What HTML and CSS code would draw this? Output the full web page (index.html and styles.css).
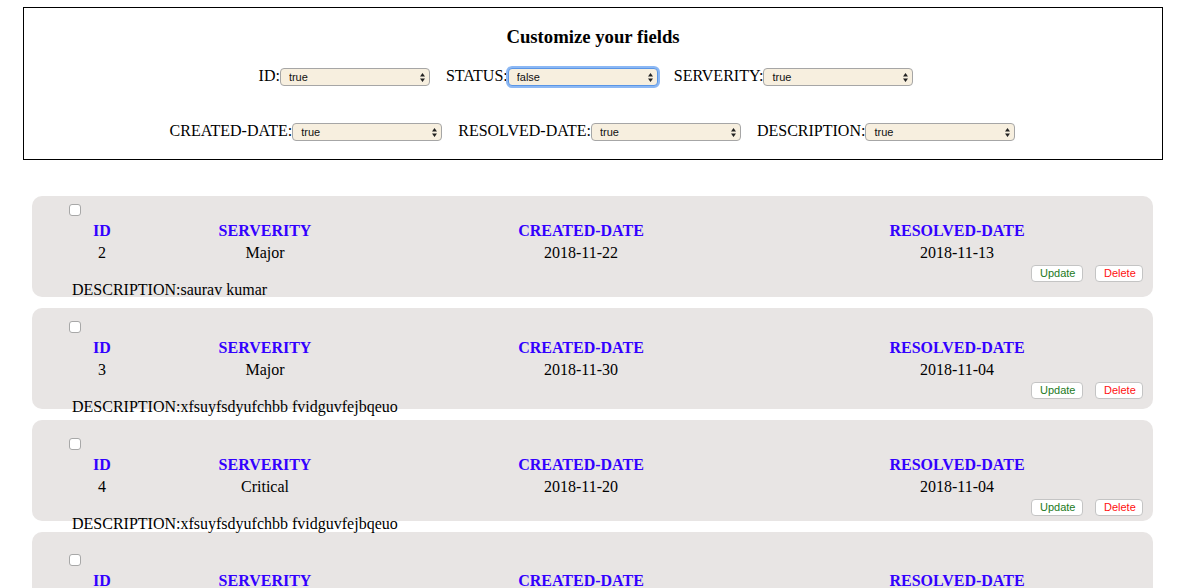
FILE: index.html
```html
<!DOCTYPE html>
<html>
<head>
<meta charset="utf-8">
<link rel="stylesheet" href="styles.css">
</head>
<body>
<div class="custom">
  <h3 class="custom-title">Customize your fields</h3>
  <div class="field-row">
    <label class="field"><span class="lbl">ID:</span><span class="sel"><select><option>true</option><option>false</option></select><svg class="arr" width="5" height="9" viewBox="0 0 5 9"><path d="M2.5 0L5 3.5H0z M2.5 9L5 5.5H0z" fill="#222"/></svg></span></label>
    <label class="field"><span class="lbl">STATUS:</span><span class="sel focus"><select><option>false</option><option>true</option></select><svg class="arr" width="5" height="9" viewBox="0 0 5 9"><path d="M2.5 0L5 3.5H0z M2.5 9L5 5.5H0z" fill="#222"/></svg></span></label>
    <label class="field"><span class="lbl">SERVERITY:</span><span class="sel"><select><option>true</option><option>false</option></select><svg class="arr" width="5" height="9" viewBox="0 0 5 9"><path d="M2.5 0L5 3.5H0z M2.5 9L5 5.5H0z" fill="#222"/></svg></span></label>
  </div>
  <div class="field-row row2">
    <label class="field"><span class="lbl">CREATED-DATE:</span><span class="sel"><select><option>true</option><option>false</option></select><svg class="arr" width="5" height="9" viewBox="0 0 5 9"><path d="M2.5 0L5 3.5H0z M2.5 9L5 5.5H0z" fill="#222"/></svg></span></label>
    <label class="field"><span class="lbl">RESOLVED-DATE:</span><span class="sel"><select><option>true</option><option>false</option></select><svg class="arr" width="5" height="9" viewBox="0 0 5 9"><path d="M2.5 0L5 3.5H0z M2.5 9L5 5.5H0z" fill="#222"/></svg></span></label>
    <label class="field"><span class="lbl">DESCRIPTION:</span><span class="sel"><select><option>true</option><option>false</option></select><svg class="arr" width="5" height="9" viewBox="0 0 5 9"><path d="M2.5 0L5 3.5H0z M2.5 9L5 5.5H0z" fill="#222"/></svg></span></label>
  </div>
</div>

<div class="list">
  <div class="card">
    <input type="checkbox" class="check">
    <div class="grid">
      <div class="th">ID</div><div class="th">SERVERITY</div><div class="th">CREATED-DATE</div><div class="th">RESOLVED-DATE</div>
      <div class="td">2</div><div class="td">Major</div><div class="td">2018-11-22</div><div class="td">2018-11-13</div>
    </div>
    <div class="actions"><button class="btn upd">Update</button><button class="btn del">Delete</button></div>
    <div class="desc">DESCRIPTION:saurav kumar</div>
  </div>
  <div class="card">
    <input type="checkbox" class="check">
    <div class="grid">
      <div class="th">ID</div><div class="th">SERVERITY</div><div class="th">CREATED-DATE</div><div class="th">RESOLVED-DATE</div>
      <div class="td">3</div><div class="td">Major</div><div class="td">2018-11-30</div><div class="td">2018-11-04</div>
    </div>
    <div class="actions"><button class="btn upd">Update</button><button class="btn del">Delete</button></div>
    <div class="desc">DESCRIPTION:xfsuyfsdyufchbb fvidguvfejbqeuo</div>
  </div>
  <div class="card">
    <input type="checkbox" class="check">
    <div class="grid">
      <div class="th">ID</div><div class="th">SERVERITY</div><div class="th">CREATED-DATE</div><div class="th">RESOLVED-DATE</div>
      <div class="td">4</div><div class="td">Critical</div><div class="td">2018-11-20</div><div class="td">2018-11-04</div>
    </div>
    <div class="actions"><button class="btn upd">Update</button><button class="btn del">Delete</button></div>
    <div class="desc">DESCRIPTION:xfsuyfsdyufchbb fvidguvfejbqeuo</div>
  </div>
  <div class="card">
    <input type="checkbox" class="check">
    <div class="grid">
      <div class="th">ID</div><div class="th">SERVERITY</div><div class="th">CREATED-DATE</div><div class="th">RESOLVED-DATE</div>
      <div class="td">5</div><div class="td">Minor</div><div class="td">2018-11-18</div><div class="td">2018-11-25</div>
    </div>
    <div class="actions"><button class="btn upd">Update</button><button class="btn del">Delete</button></div>
    <div class="desc">DESCRIPTION:xfsuyfsdyufchbb fvidguvfejbqeuo</div>
  </div>
</div>
</body>
</html>
```
FILE: styles.css
```css
html, body {
  margin: 0;
  padding: 0;
  background: #fff;
}
body {
  font-family: "Liberation Serif", "Times New Roman", serif;
  font-size: 16px;
  color: #000;
}
.custom {
  margin: 7px 20px 0 23px;
  width: 1140px;
  height: 153px;
  box-sizing: border-box;
  border: 1px solid #000;
  padding-top: 18px;
}
.custom-title {
  margin: 0;
  font-size: 18.72px;
  line-height: 22px;
  font-weight: bold;
  text-align: center;
}
.field-row {
  display: flex;
  justify-content: center;
  margin-top: 20px;
  height: 18px;
  padding-left: 2px;
}
.row2 {
  margin-top: 37px;
  padding-left: 15px;
}
.field {
  display: flex;
  align-items: center;
  line-height: 18px;
  margin-right: 16px;
}
.lbl {
  padding-bottom: 3px;
}
.sel {
  position: relative;
  display: inline-block;
  width: 150px;
  height: 18px;
}
.sel select {
  -webkit-appearance: none;
  appearance: none;
  width: 150px;
  height: 18px;
  box-sizing: border-box;
  margin: 0;
  padding: 0 0 0 8px;
  border: 1px solid #a6a6a6;
  border-radius: 4px;
  background: #f7efdf;
  font-family: "Liberation Sans", Arial, sans-serif;
  font-size: 11px;
  color: #111;
  outline: none;
  display: block;
}
.sel.focus select {
  border-color: #5a96e6;
  box-shadow: 0 0 0 2px #8cb8f4;
}
.arr {
  position: absolute;
  right: 5px;
  top: 4.5px;
  pointer-events: none;
}
.list {
  margin: 36px 0 0 32px;
  width: 1121px;
}
.card {
  height: 101px;
  box-sizing: border-box;
  background: #e8e5e4;
  border-radius: 10px;
  padding: 8px 10px 0 37px;
  margin-bottom: 11px;
}
.card:nth-child(2) {
  padding-top: 13px;
}
.card:nth-child(3) {
  padding-top: 18px;
}
.card:nth-child(4) {
  padding-top: 22px;
}
.check {
  display: block;
  margin: 0;
  width: 12px;
  height: 12px;
  -webkit-appearance: none;
  appearance: none;
  border: 1px solid #a8a8a8;
  border-radius: 3px;
  background: #fff;
  box-sizing: border-box;
}
.grid {
  display: grid;
  grid-template-columns: 60px 266px 366px 386px;
  margin-top: 4px;
  margin-left: 3px;
  line-height: 22px;
}
.th {
  text-align: center;
  font-weight: bold;
  color: #3300ff;
}
.td {
  text-align: center;
}
.actions {
  display: flex;
  justify-content: flex-end;
  gap: 12px;
  margin-top: 1px;
}
.btn {
  height: 17px;
  box-sizing: border-box;
  padding: 0 8px;
  border: 1px solid #c4c4c4;
  border-radius: 4px;
  background: #fff;
  font-family: "Liberation Sans", Arial, sans-serif;
  font-size: 11px;
  line-height: 15px;
  margin: 0;
}
.upd {
  color: #1c7a1c;
  width: 52px;
}
.del {
  color: #ff1010;
  width: 48px;
}
.desc {
  margin-top: -1px;
  margin-left: 3px;
  line-height: 18px;
  white-space: nowrap;
}
```
